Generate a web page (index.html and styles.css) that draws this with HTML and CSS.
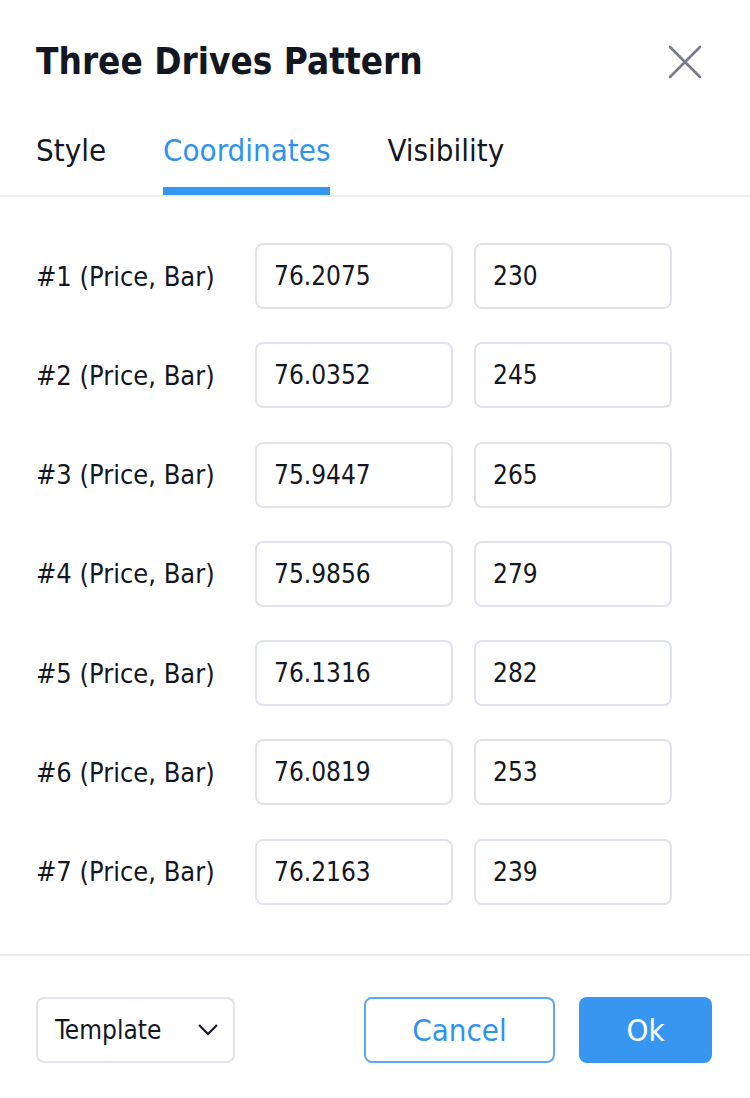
FILE: index.html
```html
<!DOCTYPE html>
<html>
<head>
<meta charset="utf-8">
<link rel="stylesheet" href="styles.css">
</head>
<body>
<div class="dialog">
  <header class="head">
    <h1 class="title">Three Drives Pattern</h1>
    <button class="close" aria-label="Close">
      <svg width="34" height="34" viewBox="0 0 34 34"><path d="M2 2L32 32M32 2L2 32" stroke="#787b86" stroke-width="2.6" fill="none" stroke-linecap="round"/></svg>
    </button>
  </header>
  <nav class="tabs">
    <div class="tab">Style</div>
    <div class="tab active">Coordinates</div>
    <div class="tab">Visibility</div>
  </nav>
  <section class="rows">
    <div class="row"><span class="label">#1 (Price, Bar)</span><div class="input">76.2075</div><div class="input">230</div></div>
    <div class="row"><span class="label">#2 (Price, Bar)</span><div class="input">76.0352</div><div class="input">245</div></div>
    <div class="row"><span class="label">#3 (Price, Bar)</span><div class="input">75.9447</div><div class="input">265</div></div>
    <div class="row"><span class="label">#4 (Price, Bar)</span><div class="input">75.9856</div><div class="input">279</div></div>
    <div class="row"><span class="label">#5 (Price, Bar)</span><div class="input">76.1316</div><div class="input">282</div></div>
    <div class="row"><span class="label">#6 (Price, Bar)</span><div class="input">76.0819</div><div class="input">253</div></div>
    <div class="row"><span class="label">#7 (Price, Bar)</span><div class="input">76.2163</div><div class="input">239</div></div>
  </section>
  <footer class="foot">
    <div class="select">Template
      <svg width="22" height="14" viewBox="0 0 22 14"><path d="M2 2l9 9 9-9" stroke="#131722" stroke-width="2.2" fill="none"/></svg>
    </div>
    <div class="spacer"></div>
    <button class="btn cancel">Cancel</button>
    <button class="btn ok">Ok</button>
  </footer>
</div>
</body>
</html>
```
FILE: styles.css
```css
* { box-sizing: border-box; }
html, body { margin: 0; padding: 0; background: #fff; }
body {
  font-family: "DejaVu Sans Condensed", "DejaVu Sans", sans-serif;
  color: #131722;
  width: 750px;
  height: 1098px;
  overflow: hidden;
}
.dialog { display: flex; flex-direction: column; }
.head {
  display: flex;
  align-items: center;
  justify-content: space-between;
  padding: 40px 48px 0 36px;
  height: 84px;
}
.title {
  margin: 0;
  font-size: 36.6px;
  font-weight: bold;
  line-height: 44px;
}
.close {
  border: none;
  background: none;
  padding: 0;
  width: 34px;
  height: 34px;
  display: flex;
}
.tabs {
  display: flex;
  gap: 57px;
  padding: 0 36px;
  margin-top: 46px;
  border-bottom: 2px solid #ebebf0;
}
.tab {
  font-size: 31px;
  line-height: 40px;
  padding-bottom: 17px;
  border-bottom: 8px solid transparent;
}
.tab.active {
  color: #2f93ee;
  border-bottom-color: #3596f0;
}
.rows {
  display: flex;
  flex-direction: column;
  gap: 33.3px;
  padding: 46px 36px 49px;
  border-bottom: 2px solid #ebebf0;
}
.row {
  display: flex;
  align-items: center;
  height: 66px;
}
.label {
  font-size: 27px;
  width: 219px;
}
.input {
  width: 198px;
  height: 66px;
  border: 2px solid #e0e3eb;
  border-radius: 8px;
  padding: 0 17px;
  display: flex;
  align-items: center;
  font-size: 26px;
  margin-right: 21px;
}
.foot {
  display: flex;
  align-items: center;
  padding: 41px 38px 0 36px;
}
.select {
  width: 199px;
  height: 66px;
  border: 2px solid #e0e3eb;
  border-radius: 8px;
  display: flex;
  align-items: center;
  justify-content: space-between;
  padding: 0 14px 0 17px;
  font-size: 26px;
}
.spacer { flex: 1; }
.btn {
  height: 66px;
  border-radius: 8px;
  font-family: inherit;
  font-size: 31px;
}
.cancel {
  width: 191px;
  border: 2px solid #5aa9f2;
  background: #fff;
  color: #2f93ee;
  margin-right: 24px;
}
.ok {
  width: 133px;
  border: none;
  background: #3796ef;
  color: #fff;
}
```
